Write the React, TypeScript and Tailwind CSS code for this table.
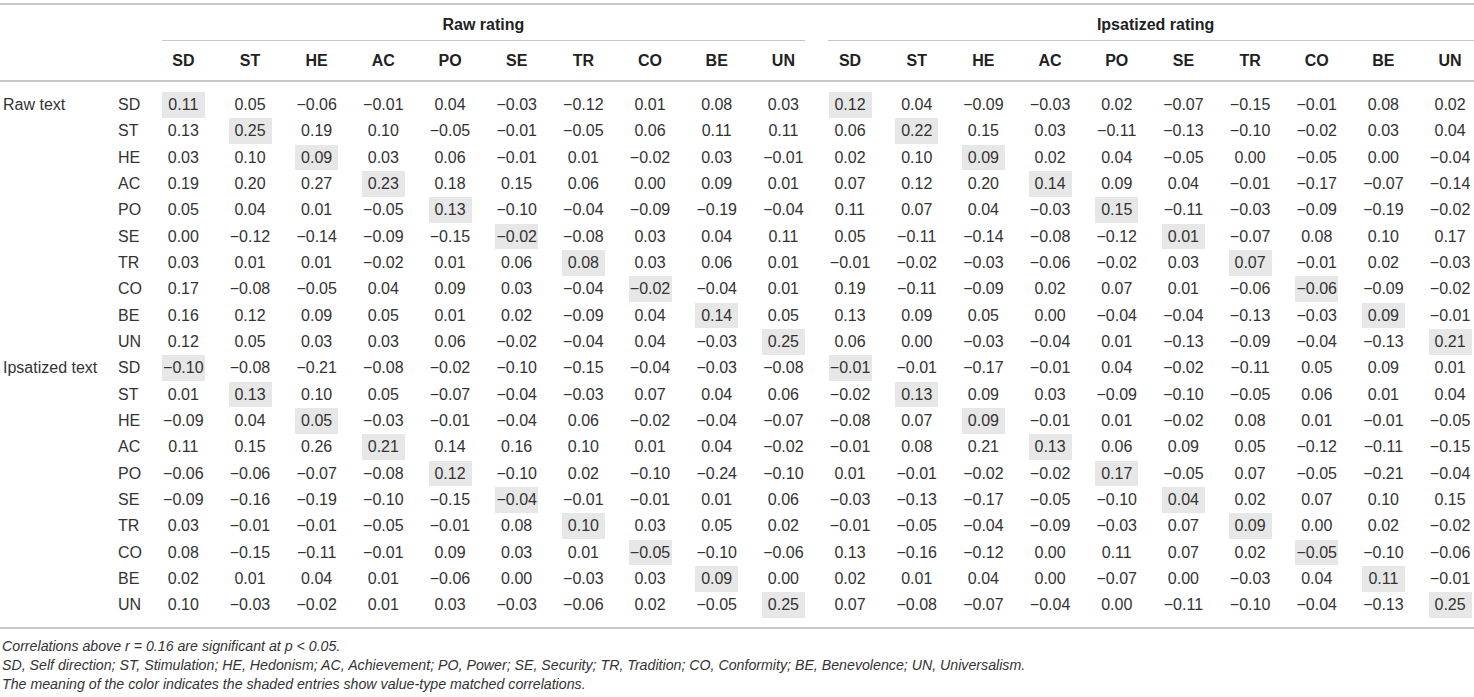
const cols = ["SD", "ST", "HE", "AC", "PO", "SE", "TR", "CO", "BE", "UN"]

// each row: raw rating (10) then ipsatized rating (10)
const rawText = [
  "0.11 0.05 -0.06 -0.01 0.04 -0.03 -0.12 0.01 0.08 0.03 0.12 0.04 -0.09 -0.03 0.02 -0.07 -0.15 -0.01 0.08 0.02",
  "0.13 0.25 0.19 0.10 -0.05 -0.01 -0.05 0.06 0.11 0.11 0.06 0.22 0.15 0.03 -0.11 -0.13 -0.10 -0.02 0.03 0.04",
  "0.03 0.10 0.09 0.03 0.06 -0.01 0.01 -0.02 0.03 -0.01 0.02 0.10 0.09 0.02 0.04 -0.05 0.00 -0.05 0.00 -0.04",
  "0.19 0.20 0.27 0.23 0.18 0.15 0.06 0.00 0.09 0.01 0.07 0.12 0.20 0.14 0.09 0.04 -0.01 -0.17 -0.07 -0.14",
  "0.05 0.04 0.01 -0.05 0.13 -0.10 -0.04 -0.09 -0.19 -0.04 0.11 0.07 0.04 -0.03 0.15 -0.11 -0.03 -0.09 -0.19 -0.02",
  "0.00 -0.12 -0.14 -0.09 -0.15 -0.02 -0.08 0.03 0.04 0.11 0.05 -0.11 -0.14 -0.08 -0.12 0.01 -0.07 0.08 0.10 0.17",
  "0.03 0.01 0.01 -0.02 0.01 0.06 0.08 0.03 0.06 0.01 -0.01 -0.02 -0.03 -0.06 -0.02 0.03 0.07 -0.01 0.02 -0.03",
  "0.17 -0.08 -0.05 0.04 0.09 0.03 -0.04 -0.02 -0.04 0.01 0.19 -0.11 -0.09 0.02 0.07 0.01 -0.06 -0.06 -0.09 -0.02",
  "0.16 0.12 0.09 0.05 0.01 0.02 -0.09 0.04 0.14 0.05 0.13 0.09 0.05 0.00 -0.04 -0.04 -0.13 -0.03 0.09 -0.01",
  "0.12 0.05 0.03 0.03 0.06 -0.02 -0.04 0.04 -0.03 0.25 0.06 0.00 -0.03 -0.04 0.01 -0.13 -0.09 -0.04 -0.13 0.21",
]

const ipsText = [
  "-0.10 -0.08 -0.21 -0.08 -0.02 -0.10 -0.15 -0.04 -0.03 -0.08 -0.01 -0.01 -0.17 -0.01 0.04 -0.02 -0.11 0.05 0.09 0.01",
  "0.01 0.13 0.10 0.05 -0.07 -0.04 -0.03 0.07 0.04 0.06 -0.02 0.13 0.09 0.03 -0.09 -0.10 -0.05 0.06 0.01 0.04",
  "-0.09 0.04 0.05 -0.03 -0.01 -0.04 0.06 -0.02 -0.04 -0.07 -0.08 0.07 0.09 -0.01 0.01 -0.02 0.08 0.01 -0.01 -0.05",
  "0.11 0.15 0.26 0.21 0.14 0.16 0.10 0.01 0.04 -0.02 -0.01 0.08 0.21 0.13 0.06 0.09 0.05 -0.12 -0.11 -0.15",
  "-0.06 -0.06 -0.07 -0.08 0.12 -0.10 0.02 -0.10 -0.24 -0.10 0.01 -0.01 -0.02 -0.02 0.17 -0.05 0.07 -0.05 -0.21 -0.04",
  "-0.09 -0.16 -0.19 -0.10 -0.15 -0.04 -0.01 -0.01 0.01 0.06 -0.03 -0.13 -0.17 -0.05 -0.10 0.04 0.02 0.07 0.10 0.15",
  "0.03 -0.01 -0.01 -0.05 -0.01 0.08 0.10 0.03 0.05 0.02 -0.01 -0.05 -0.04 -0.09 -0.03 0.07 0.09 0.00 0.02 -0.02",
  "0.08 -0.15 -0.11 -0.01 0.09 0.03 0.01 -0.05 -0.10 -0.06 0.13 -0.16 -0.12 0.00 0.11 0.07 0.02 -0.05 -0.10 -0.06",
  "0.02 0.01 0.04 0.01 -0.06 0.00 -0.03 0.03 0.09 0.00 0.02 0.01 0.04 0.00 -0.07 0.00 -0.03 0.04 0.11 -0.01",
  "0.10 -0.03 -0.02 0.01 0.03 -0.03 -0.06 0.02 -0.05 0.25 0.07 -0.08 -0.07 -0.04 0.00 -0.11 -0.10 -0.04 -0.13 0.25",
]

const gridCols = "grid grid-cols-[115px_35px_repeat(20,66.68px)]"

function DataRow({ label, code, idx, values }: { label?: string; code: string; idx: number; values: string }) {
  const cells = values.split(" ").map((v) => v.replace("-", "\u2212"))
  return (
    <div className={`${gridCols} h-[26.33px] items-center`}>
      <div className="pl-[3px] whitespace-nowrap">{label}</div>
      <div className="pl-[3px]">{code}</div>
      {cells.map((v, i) => {
        const shaded = i % 10 === idx
        return (
          <div key={i} className="flex justify-center">
            <span
              className={`flex h-[25.6px] w-[43px] items-center justify-center whitespace-nowrap ${shaded ? "bg-[#e7e7e7]" : ""}`}
            >
              {v}
            </span>
          </div>
        )
      })}
    </div>
  )
}

export default function App() {
  return (
    <div className="w-[1474px] overflow-hidden bg-white pt-[3px] font-[family-name:'Liberation_Sans',Arial,sans-serif] text-[16px] text-[#333]">
      <div className="h-[2px] bg-[#c8c8c8]" />

      {/* group headers */}
      <div className={gridCols}>
        <div className="col-span-2" />
        <div className="col-span-10 mx-[12px] h-[36px] border-b border-[#c8c8c8] pt-[10px] text-center font-bold leading-[20px] text-[#222]">
          Raw rating
        </div>
        <div className="col-span-10 ml-[11px] h-[36px] border-b border-[#c8c8c8] pt-[10px] text-center font-bold leading-[20px] text-[#222]">
          Ipsatized rating
        </div>
      </div>

      {/* column headers */}
      <div className="border-b-2 border-[#c8c8c8]">
        <div className={`${gridCols} h-[39px] pt-[10px] leading-[20px]`}>
          <div className="col-span-2" />
          {[...cols, ...cols].map((c, i) => (
            <div key={i} className="text-center font-bold text-[#222]">
              {c}
            </div>
          ))}
        </div>
      </div>

      {/* body */}
      <div className="border-b-2 border-[#c8c8c8] pt-[9.8px] pb-[9px]">
        {rawText.map((row, i) => (
          <DataRow key={"r" + i} label={i === 0 ? "Raw text" : undefined} code={cols[i]} idx={i} values={row} />
        ))}
        {ipsText.map((row, i) => (
          <DataRow key={"p" + i} label={i === 0 ? "Ipsatized text" : undefined} code={cols[i]} idx={i} values={row} />
        ))}
      </div>

      <div className="pt-[8px] pl-[2px] text-[14.2px] italic leading-[19px]">
        <p>Correlations above r = 0.16 are significant at p &lt; 0.05.</p>
        <p>
          SD, Self direction; ST, Stimulation; HE, Hedonism; AC, Achievement; PO, Power; SE, Security; TR, Tradition;
          CO, Conformity; BE, Benevolence; UN, Universalism.
        </p>
        <p>The meaning of the color indicates the shaded entries show value-type matched correlations.</p>
      </div>
    </div>
  )
}
